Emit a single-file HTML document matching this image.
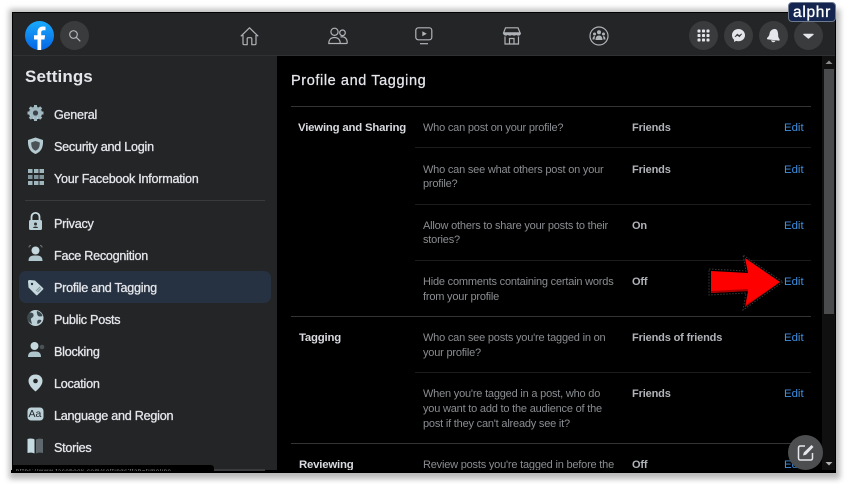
<!DOCTYPE html>
<html><head><meta charset="utf-8"><style>
html,body{margin:0;padding:0;background:#fff}
body{width:848px;height:484px;overflow:hidden;position:relative;font-family:"Liberation Sans",sans-serif;filter:blur(.3px)}
div,span{position:absolute;white-space:nowrap}
#shadow{left:9px;top:9px;width:831px;height:470px;background:#bbb;filter:blur(3px)}
.nav{font-size:12.6px;font-weight:400;color:#e4e6eb;left:54px;line-height:16px;letter-spacing:-.25px;-webkit-text-stroke:.3px #e4e6eb}
.q{font-size:11px;color:#8a8d91;left:423px;line-height:14px;letter-spacing:-.2px}
.v{font-size:11px;font-weight:700;color:#b0b3b8;left:632px;line-height:14px;letter-spacing:-.15px}
.e{font-size:11.4px;color:#3f8ee0;left:784px;line-height:14px}
.h{font-size:11.4px;font-weight:700;color:#d8dadf;line-height:14px;letter-spacing:-.2px}
.ln{height:1px;background:#333436}
.lt{height:1px;background:#1a1b1c}
.c{width:29px;height:29px;border-radius:50%;background:#3a3b3c;top:21px}
svg{position:absolute;overflow:visible}
</style></head><body>
<div id="shadow"></div>
<div style="left:12px;top:12px;width:824px;height:461px;background:#000"></div>
<div style="left:13px;top:13px;width:822px;height:42px;background:#242526"></div>
<div style="left:13px;top:55px;width:822px;height:1px;background:#303133"></div>
<div style="left:13px;top:56px;width:264px;height:414px;background:#242526"></div>
<div style="left:822px;top:56px;width:13px;height:414px;background:#101011"></div>
<div style="left:824px;top:69px;width:10px;height:245px;background:#4a4b4c"></div>
<svg style="left:0;top:0" width="848" height="484">
<polygon points="825.5,64 832.5,64 829,60.5" fill="#8a8a8a"/>
<polygon points="825.5,462 832.5,462 829,465.5" fill="#b0b0b0"/>
</svg>

<!-- fb logo -->
<div style="left:25px;top:21px;width:29px;height:29px;border-radius:50%;background:linear-gradient(#19aafb,#0666e6)"></div>
<svg style="left:25px;top:21px" width="29" height="29"><path d="M12.5 29V18.5H9v-4.2h3.5v-3.2c0-3.6 2.1-5.6 5.4-5.6 1.3 0 2.6.2 2.6.2v3.6h-1.9c-1.8 0-2.4 1.1-2.4 2.3v2.7h3.9l-.6 4.2h-3.3V29z" fill="#fff"/></svg>
<div class="c" style="left:60px"></div>
<svg style="left:60px;top:21px" width="29" height="29" fill="none" stroke="#b0b3b8" stroke-width="1.2"><circle cx="13.5" cy="13.5" r="3.8"/><path d="M16.3 16.3l4 4"/></svg>

<!-- center nav -->
<svg style="left:240px;top:27px" width="19" height="19" fill="none" stroke="#b0b3b8" stroke-width="1.2" stroke-linejoin="round"><path d="M.8 9.3L9.5.8l8.7 8.5M3 8v8.5c0 .8.5 1.2 1.2 1.2h3v-6c0-.6.4-1 1-1h2.6c.6 0 1 .4 1 1v6h3c.7 0 1.2-.4 1.2-1.2V8"/></svg>
<svg style="left:328px;top:27px" width="20" height="18" fill="none" stroke="#b0b3b8" stroke-width="1.2"><circle cx="6.5" cy="4.8" r="3.6"/><circle cx="14.5" cy="5.8" r="2.8"/><path d="M.8 16.5c0-3.5 2-6 5.7-6s5.7 2.5 5.7 6zM12.5 10c4-1 6.7 1.5 6.7 5.5 0 .7-.5 1-1 1h-5.5"/></svg>
<svg style="left:415px;top:27px" width="19" height="18" fill="none" stroke="#b0b3b8" stroke-width="1.2"><rect x=".8" y=".8" width="16" height="12" rx="2.5"/><path d="M5 16.7h8"/><path d="M7.3 4.3l4.5 2.5-4.500 2.500z" fill="#b0b3b8" stroke="none"/></svg>
<svg style="left:503px;top:27px" width="18" height="18" fill="none" stroke="#b0b3b8" stroke-width="1.2"><path d="M2.5.8h12.5l2 5H.6z"/><path d="M.6 5.8c0 3 4 3 4.2 0 .2 3 4 3 4.2 0 .2 3 4 3 4.2 0 .2 3 4 3 4.2 0" fill="#b0b3b8"/><path d="M2 9.500v7.500h13.500V9.500M6.500 17v-5.500h4.500V17"/></svg>
<svg style="left:589px;top:26px" width="20" height="20"><circle cx="10" cy="10" r="9" fill="none" stroke="#b0b3b8" stroke-width="1.2"/><g fill="#b0b3b8"><circle cx="10" cy="6.3" r="2"/><circle cx="5.5" cy="8" r="1.5"/><circle cx="14.5" cy="8" r="1.5"/><path d="M6.5 14c0-3 1.5-4.500 3.500-4.500s3.500 1.500 3.500 4.500zM3.500 13.500c0-2 .8-3.500 2.500-3.500l-.5 3.500zM16.500 13.500c0-2-.8-3.500-2.500-3.500l.5 3.500z"/></g></svg>

<!-- right circles -->
<div class="c" style="left:689px"></div>
<div class="c" style="left:724px"></div>
<div class="c" style="left:759px"></div>
<div class="c" style="left:794px"></div>
<svg style="left:689px;top:21px" width="29" height="29" fill="#e4e6eb"><rect x="8.5" y="8.5" width="3" height="3" rx=".8"/><rect x="13" y="8.5" width="3" height="3" rx=".8"/><rect x="17.5" y="8.5" width="3" height="3" rx=".8"/><rect x="8.5" y="13" width="3" height="3" rx=".8"/><rect x="13" y="13" width="3" height="3" rx=".8"/><rect x="17.5" y="13" width="3" height="3" rx=".8"/><rect x="8.5" y="17.5" width="3" height="3" rx=".8"/><rect x="13" y="17.5" width="3" height="3" rx=".8"/><rect x="17.5" y="17.5" width="3" height="3" rx=".8"/></svg>
<svg style="left:724px;top:21px" width="29" height="29"><path d="M14.5 8c-3.700 0-6.500 2.700-6.500 6.200 0 1.900.8 3.500 2.100 4.600v2.200l2-1.100c.7.2 1.500.3 2.400.3 3.700 0 6.500-2.700 6.500-6s-2.800-6.200-6.500-6.200z" fill="#e4e6eb"/><path d="M10.800 16l2.500-3 1.800 1.500 2.800-1.700-2.500 3-1.800-1.500z" fill="#3a3b3c" stroke="#3a3b3c" stroke-width=".6"/></svg>
<svg style="left:759px;top:21px" width="29" height="29" fill="#e4e6eb"><path d="M15.500 8c-3 .2-4.800 2.500-5 5-.2 2.200-2.200 3.300-2.500 4.300-.2.600.2 1 .8 1.100l10.800 1.200c.7.1 1.200-.3 1.100-.9-.2-1-1.800-2.400-1.500-4.700C19 11 18.500 7.800 15.500 8z"/><path d="M12 19.200l4.500.5c-.5 1.100-1.300 1.600-2.300 1.500s-1.900-.8-2.200-2z"/></svg>
<svg style="left:794px;top:21px" width="29" height="29"><path d="M9.800 12.800c-.5 0-.8.600-.4 1l4.500 3.700c.3.300.8.300 1.100 0l4.500-3.700c.4-.4.100-1-.4-1z" fill="#e4e6eb"/></svg>

<!-- alphr badge -->
<div style="left:788px;top:2px;width:48px;height:20px;background:#14264f;border:1px solid #6e7a90;box-sizing:border-box;border-radius:4px"></div>
<div style="left:793px;top:4px;font-size:15.5px;font-weight:400;color:#fff;line-height:18px;letter-spacing:.7px;-webkit-text-stroke:.35px #fff">alphr</div>

<!-- sidebar -->
<div style="left:25px;top:67px;font-size:17px;font-weight:700;color:#e4e6eb;line-height:20px;letter-spacing:.1px">Settings</div>
<div style="left:25px;top:200px;width:240px;height:1px;background:#3a3b3c"></div>
<div style="left:19px;top:271px;width:252px;height:32px;border-radius:7px;background:#263241"></div>

<div class="nav" style="top:107px">General</div>
<div class="nav" style="top:139px">Security and Login</div>
<div class="nav" style="top:171px">Your Facebook Information</div>
<div class="nav" style="top:216px">Privacy</div>
<div class="nav" style="top:248px">Face Recognition</div>
<div class="nav" style="top:280px">Profile and Tagging</div>
<div class="nav" style="top:312px">Public Posts</div>
<div class="nav" style="top:344px">Blocking</div>
<div class="nav" style="top:376px">Location</div>
<div class="nav" style="top:408px">Language and Region</div>
<div class="nav" style="top:440px">Stories</div>

<svg style="left:0;top:0" width="848" height="484">
<defs><linearGradient id="g" x1="0" y1="0" x2="0" y2="1"><stop offset="0" stop-color="#86a0a8"/><stop offset="1" stop-color="#c0d6dc"/></linearGradient></defs>
<!-- gear -->
<g fill="url(#g)"><circle cx="35.5" cy="113" r="6.5"/><g stroke="#a0b8c0" stroke-width="3"><path d="M35.5 105v16M27.5 113h16M29.8 107.300l11.400 11.400M41.200 107.300l-11.400 11.400"/></g></g><circle cx="35.5" cy="113" r="2.6" fill="#3a4448"/>
<!-- shield -->
<path d="M35.5 137.500l7.500 2.500c.3 6-1 11.500-7.500 14-6.500-2.500-7.800-8-7.500-14z" fill="#b5cbd2"/><path d="M35.5 141l4.300 1.500c0 4-.8 6.800-4.300 8.300-3.500-1.500-4.300-4.300-4.300-8.300z" fill="#4a5458"/>
<!-- grid -->
<g fill="#9fb6bd"><rect x="28" y="169" width="4.500" height="4"/><rect x="34" y="169" width="4.500" height="4"/><rect x="39.500" y="169" width="4.500" height="4"/><rect x="28" y="175" width="4.500" height="4" fill="#7f949a"/><rect x="34" y="175" width="4.500" height="4" fill="#7f949a"/><rect x="39.500" y="175" width="4.500" height="4" fill="#7f949a"/><rect x="28" y="181" width="4.500" height="4"/><rect x="34" y="181" width="4.500" height="4"/><rect x="39.500" y="181" width="4.500" height="4"/></g>
<!-- lock -->
<path d="M31.500 220v-3c0-5.500 8-5.500 8 0v3" fill="none" stroke="#c4d8de" stroke-width="1.800"/><rect x="29" y="220" width="13" height="10" rx="1.500" fill="#b7ced5"/><circle cx="35.500" cy="224" r="1.500" fill="#333"/><path d="M33 228c0-2 5-2 5 0z" fill="#333"/>
<!-- face -->
<circle cx="35.500" cy="250.500" r="4" fill="#c4d8de"/><path d="M28.500 261c0-5 3-5.500 7-5.500s7 .5 7 5.500z" fill="#b0c7ce"/><path d="M29 247.500c0-1 .5-2 2-2M42 247.500c0-1-.5-2-2-2" stroke="#777" fill="none"/>
<!-- tag -->
<path d="M28 281.500c0-1 .5-1.500 1.500-1.500l5.500.5 8 7.500c.5.500.5 1 0 1.500l-5.500 5.500c-.5.500-1 .5-1.500 0l-7.500-7.500z" fill="#c4d8de"/><circle cx="32" cy="284" r="1.200" fill="#263241"/><path d="M36 291l4-4M37.500 292l3.500-3.500" stroke="#7e9299" stroke-width="1"/>
<!-- globe -->
<circle cx="35.500" cy="318" r="8" fill="#bdd2d8"/><path d="M30 312.500c3 0 4 1.500 3.500 3.500s-3 1.500-2.500 4l1 4c-3-1-5-4-5-7 .2-2 1.500-3.500 3-4.500zM37 311c2 .5 5 2 5.500 5-2.500 1-4.500.5-5-1s-1-2.500-.5-4zM38 320c2-.5 3 0 3.500.5-.5 1.500-2 3-4 3.500-.5-1.500-.5-3 .5-4z" fill="#3c4a50"/>
<!-- block -->
<circle cx="34.500" cy="346" r="4" fill="#c4d8de"/><path d="M28 357c0-5 3-5.500 6.500-5.500s6.500.5 6.500 5.500z" fill="#b0c7ce"/><circle cx="42" cy="347" r="2.300" fill="#4a5458"/>
<!-- pin -->
<path d="M35.500 374.500c-4.500 0-7 3-7 6.500 0 4 4 8 7 10.500 3-2.500 7-6.500 7-10.500 0-3.500-2.500-6.500-7-6.500z" fill="#c4d8de"/><circle cx="35.500" cy="381" r="2.300" fill="#242526"/>
<!-- Aa -->
<rect x="27.500" y="407.500" width="16" height="13" rx="3.500" fill="#bdd2d8"/>
<!-- book -->
<path d="M27.500 439c3-.8 5.500-.5 7 .5v14c-2-1-4.500-1-7-.5z" fill="#c4dbe2"/><path d="M36 439.500c2-1 4-1.200 7-.5v14c-2.500-.5-5-.5-7 .5z" fill="#5e686d"/>
</svg>
<div style="left:28.5px;top:408px;font-size:10.5px;color:#22292c;line-height:12px">Aa</div>

<!-- main -->
<div style="left:291px;top:72px;font-size:14.5px;font-weight:400;color:#e4e6eb;line-height:18px;letter-spacing:.6px;-webkit-text-stroke:.25px #e4e6eb">Profile and Tagging</div>
<div class="ln" style="left:291px;top:106px;width:520px"></div>
<div class="ln" style="left:291px;top:316px;width:520px"></div>
<div class="ln" style="left:291px;top:443px;width:520px"></div>
<div class="lt" style="left:415px;top:147px;width:396px"></div>
<div class="lt" style="left:415px;top:204px;width:396px"></div>
<div class="lt" style="left:415px;top:260px;width:396px"></div>
<div class="lt" style="left:415px;top:372px;width:396px"></div>

<div class="h" style="left:298px;top:121px">Viewing and Sharing</div>
<div class="h" style="left:299px;top:331px">Tagging</div>
<div class="h" style="left:299px;top:458px">Reviewing</div>

<div class="q" style="top:121px">Who can post on your profile?</div>
<div class="v" style="top:121px">Friends</div><div class="e" style="top:121px">Edit</div>
<div class="q" style="top:163px">Who can see what others post on your</div>
<div class="q" style="top:177px">profile?</div>
<div class="v" style="top:163px">Friends</div><div class="e" style="top:163px">Edit</div>
<div class="q" style="top:219px">Allow others to share your posts to their</div>
<div class="q" style="top:233px">stories?</div>
<div class="v" style="top:219px">On</div><div class="e" style="top:219px">Edit</div>
<div class="q" style="top:275px">Hide comments containing certain words</div>
<div class="q" style="top:290px">from your profile</div>
<div class="v" style="top:275px">Off</div><div class="e" style="top:275px">Edit</div>
<div class="q" style="top:331px">Who can see posts you're tagged in on</div>
<div class="q" style="top:346px">your profile?</div>
<div class="v" style="top:331px">Friends of friends</div><div class="e" style="top:331px">Edit</div>
<div class="q" style="top:387px">When you're tagged in a post, who do</div>
<div class="q" style="top:402px">you want to add to the audience of the</div>
<div class="q" style="top:417px">post if they can't already see it?</div>
<div class="v" style="top:387px">Friends</div><div class="e" style="top:387px">Edit</div>
<div class="q" style="top:458px">Review posts you're tagged in before the</div>
<div class="v" style="top:458px">Off</div><div class="e" style="top:458px">Edit</div>

<!-- red arrow -->
<svg style="left:0;top:0" width="848" height="484">
<polygon points="709,269 746,271 743,255 783,282 743,310 746,293 709,295" fill="none" stroke="#3a3a3a" stroke-width="1" stroke-dasharray="1.5 1.5"/>
<polygon points="711,271 748,273 745,258 780,282 745,307 748,291 711,293" fill="#f00"/>
<polygon points="711,291 748,289 746,305 780,282 745,307 748,291 711,293" fill="#a00"/>
</svg>

<!-- compose -->
<div style="left:788px;top:435px;width:35px;height:35px;border-radius:50%;background:#4d4e50"></div>
<svg style="left:788px;top:435px" width="35" height="35" fill="none" stroke="#e4e6eb" stroke-width="1.5"><path d="M17 11h-4.500c-1.200 0-2 .8-2 2v10c0 1.200.8 2 2 2h10c1.200 0 2-.8 2-2v-5"/><path d="M15 20.500l.8-3L23.500 10l2 2-7.500 7.700z" fill="#e4e6eb" stroke="none"/></svg>

<!-- bottom -->
<div style="left:11px;top:470px;width:825px;height:3px;background:#000"></div>
<div style="left:214px;top:469px;width:51px;height:1.5px;background:#3a3b3c"></div>
<div style="left:12px;top:465px;width:202px;height:8px;background:#000;border-radius:0 3px 0 0"></div>
<div style="left:16px;top:469px;font-size:6px;color:#8d8d8d;line-height:6px;height:2px;overflow:hidden;letter-spacing:.6px">https://www.facebook.com/settings?tab=timeline</div>
</body></html>
